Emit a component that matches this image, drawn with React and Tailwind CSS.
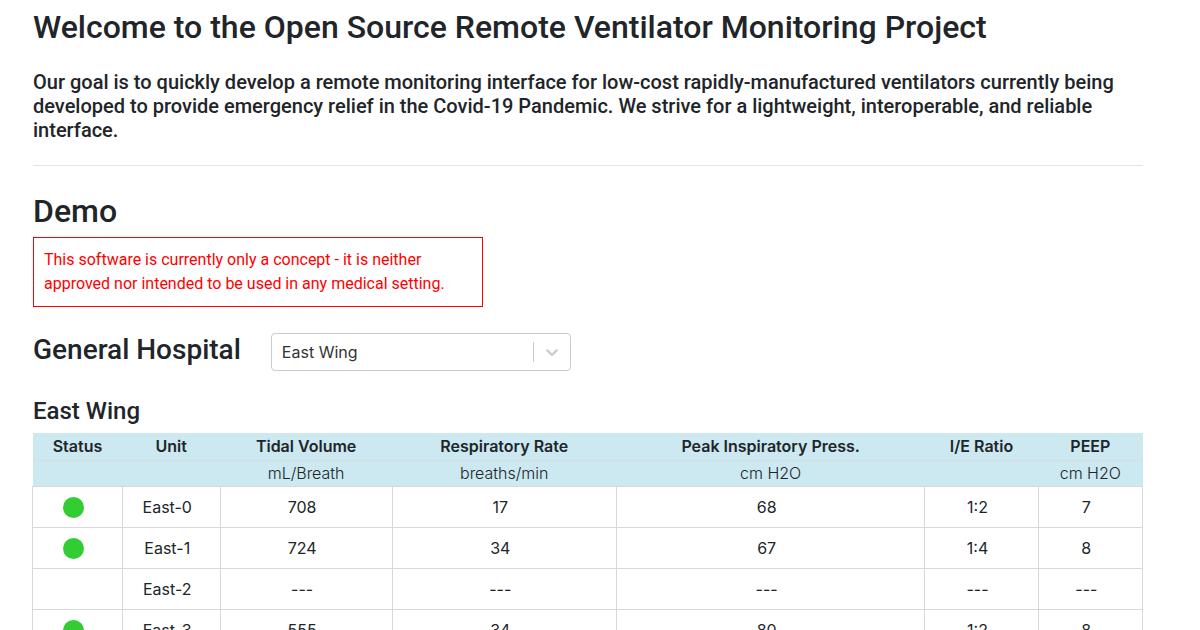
const wings = ["East Wing", "West Wing", "North Wing"];

const columns = [
  { title: "Status", unit: "", width: "w-[8.1%]" },
  { title: "Unit", unit: "", width: "w-[8.8%]" },
  { title: "Tidal Volume", unit: "mL/Breath", width: "w-[15.5%]" },
  { title: "Respiratory Rate", unit: "breaths/min", width: "w-[20.2%]" },
  { title: "Peak Inspiratory Press.", unit: "cm H2O", width: "w-[27.8%]" },
  { title: "I/E Ratio", unit: "", width: "w-[10.2%]" },
  { title: "PEEP", unit: "cm H2O", width: "w-[9.4%]" },
];

const units = [
  { name: "East-0", online: true, values: ["708", "17", "68", "1:2", "7"] },
  { name: "East-1", online: true, values: ["724", "34", "67", "1:4", "8"] },
  { name: "East-2", online: false, values: ["---", "---", "---", "---", "---"] },
  { name: "East-3", online: true, values: ["555", "34", "80", "1:2", "8"] },
];

function WingSelect() {
  return (
    <div className="relative w-[300px]">
      <select
        aria-label="Wing"
        className="block h-[38px] w-full appearance-none rounded border border-[#cccccc] bg-white pl-[10px] pr-12 text-base text-[#333333]"
      >
        {wings.map((wing) => (
          <option key={wing}>{wing}</option>
        ))}
      </select>
      <div className="pointer-events-none absolute inset-y-0 right-px flex items-center text-[#cccccc]">
        <span className="h-5 w-px bg-[#cccccc]" />
        <svg className="mx-2 h-5 w-5" viewBox="0 0 20 20" fill="currentColor" aria-hidden="true">
          <path d="M4.516 7.548c0.436-0.446 1.043-0.481 1.576 0l3.908 3.747 3.908-3.747c0.533-0.481 1.141-0.446 1.574 0 0.436 0.445 0.408 1.197 0 1.615-0.406 0.418-4.695 4.502-4.695 4.502-0.217 0.223-0.502 0.335-0.787 0.335s-0.57-0.112-0.789-0.335c0 0-4.287-4.084-4.695-4.502s-0.436-1.17 0-1.615z" />
        </svg>
      </div>
    </div>
  );
}

function VentilatorTable() {
  return (
    <div className="-ml-px">
      <table className="w-full table-fixed border-collapse text-center text-base">
        <thead className="bg-[#cce8f0]">
          <tr className="h-[27px] border-b border-[#dadddf]">
            {columns.map((column) => (
              <th key={column.title} scope="col" className={`${column.width} p-0 font-semibold`}>
                {column.title}
              </th>
            ))}
          </tr>
          <tr className="h-[26px]">
            {columns.map((column) => (
              <td key={column.title} className="p-0 font-light">
                {column.unit}
              </td>
            ))}
          </tr>
        </thead>
        <tbody>
          {units.map((unit) => (
            <tr key={unit.name} className="h-[41px]">
              <td className="border border-[#d9d9d9] pb-0 pl-0 pr-2 pt-0.5">
                {unit.online && (
                  <svg className="mx-auto block h-[21px] w-[21px]" viewBox="0 0 21 21" role="img" aria-label="Online">
                    <circle cx="10.5" cy="10.5" r="10.5" fill="#32cd32" />
                  </svg>
                )}
              </td>
              <td className="border border-[#d9d9d9] py-0 pl-0 pr-2">{unit.name}</td>
              {unit.values.map((value, i) => (
                <td key={i} className="border border-[#d9d9d9] py-0 pl-0 pr-2">
                  {value}
                </td>
              ))}
            </tr>
          ))}
        </tbody>
      </table>
    </div>
  );
}

export default function App() {
  return (
    <div className="h-screen overflow-hidden bg-white font-['Inter',sans-serif] text-[#212529]">
      <main className="pl-[33px] pr-[57px] pt-2">
        <h1 className="font-['Roboto',sans-serif] text-[32px] font-medium leading-[38px]">
          Welcome to the Open Source Remote Ventilator Monitoring Project
        </h1>
        <p className="mt-6 font-['Roboto',sans-serif] text-[20px] font-medium leading-6">
          Our goal is to quickly develop a remote monitoring interface for low-cost rapidly-manufactured
          ventilators currently being developed to provide emergency relief in the Covid-19 Pandemic. We
          strive for a lightweight, interoperable, and reliable interface.
        </p>
        <hr className="mb-[26px] mt-[23px] border-[#e5e5e5]" />
        <h2 className="font-['Roboto',sans-serif] text-[32px] font-medium leading-[38px]">Demo</h2>
        <p className="mt-[7px] w-[450px] border border-[#ff0000] p-[10px] font-['Roboto',sans-serif] text-base leading-6 text-[#ff0000]">
          This software is currently only a concept - it is neither approved nor intended to be used in any
          medical setting.
        </p>
        <div className="mt-[26px] flex items-start gap-[30px]">
          <h3 className="font-['Roboto',sans-serif] text-[28px] font-medium leading-[34px]">General Hospital</h3>
          <WingSelect />
        </div>
        <h4 className="mb-[7px] mt-[26px] font-['Roboto',sans-serif] text-[24px] font-medium leading-[29px]">East Wing</h4>
        <VentilatorTable />
      </main>
    </div>
  );
}
